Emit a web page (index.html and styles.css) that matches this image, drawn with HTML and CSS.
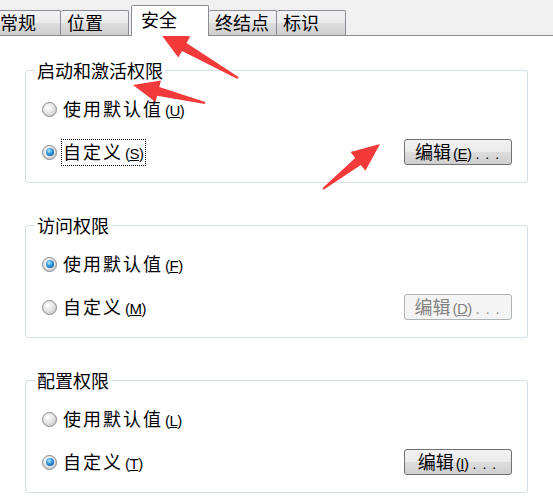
FILE: index.html
```html
<!DOCTYPE html>
<html lang="zh-CN">
<head>
    <meta charset="UTF-8">
    <title>安全</title>
    <link rel="stylesheet" href="styles.css">
</head>
<body>
    <div class="window">
        <div class="tabstrip">
            <div class="tab">常规</div>
            <div class="tab">位置</div>
            <div class="tab active">安全</div>
            <div class="tab">终结点</div>
            <div class="tab last">标识</div>
        </div>

        <div class="page">
            <fieldset class="group">
                <legend>启动和激活权限</legend>
                <div class="row">
                    <label class="option"><span class="radio"></span><span class="label">使用默认值<span class="key">(<u>U</u>)</span></span></label>
                </div>
                <div class="row">
                    <label class="option"><span class="radio checked"></span><span class="label focused">自定义<span class="key">(<u>S</u>)</span></span></label>
                    <button class="edit">编辑<span class="key">(<u>E</u>)</span><span class="dots">...</span></button>
                </div>
            </fieldset>

            <fieldset class="group">
                <legend>访问权限</legend>
                <div class="row">
                    <label class="option"><span class="radio checked"></span><span class="label">使用默认值<span class="key">(<u>F</u>)</span></span></label>
                </div>
                <div class="row">
                    <label class="option"><span class="radio"></span><span class="label">自定义<span class="key">(<u>M</u>)</span></span></label>
                    <button class="edit" disabled>编辑<span class="key">(<u>D</u>)</span><span class="dots">...</span></button>
                </div>
            </fieldset>

            <fieldset class="group">
                <legend>配置权限</legend>
                <div class="row">
                    <label class="option"><span class="radio"></span><span class="label">使用默认值<span class="key">(<u>L</u>)</span></span></label>
                </div>
                <div class="row">
                    <label class="option"><span class="radio checked"></span><span class="label">自定义<span class="key">(<u>T</u>)</span></span></label>
                    <button class="edit">编辑<span class="key">(<u>I</u>)</span><span class="dots">...</span></button>
                </div>
            </fieldset>
        </div>

        <!-- red annotation arrows -->
        <svg class="arrows" width="553" height="502" viewBox="0 0 553 502">
            <polygon points="160,33 190.3,36.6 186.5,43.1 238.5,77.1 237.5,78.9 182.1,50.9 178.3,57.4"/>
            <polygon points="133,85 160.9,80.6 159.3,86.9 205.2,102 204.8,104 157.1,95.7 155.5,102"/>
            <polygon points="380,144 365.4,170.8 360.8,164.9 323.6,189.8 322.4,188.2 355.2,157.9 350.6,152"/>
        </svg>
    </div>
</body>
</html>
```

FILE: styles.css
```css
* {
    box-sizing: border-box;
}

body {
    margin: 0;
    background: #f0f0f0;
    font-family: "Noto Sans CJK SC", "Liberation Sans", sans-serif;
    color: #000;
}

.window {
    position: relative;
    width: 553px;
    height: 502px;
    overflow: hidden;
}

/* tabs */
.tabstrip {
    display: flex;
    align-items: flex-end;
    height: 36px;
    margin-left: -7px;
    border-bottom: 1px solid #898c95;
}

.tab {
    width: 68px;
    height: 25px;
    padding-left: 6px;
    border: 1px solid #898c95;
    border-bottom: none;
    border-radius: 2px 2px 0 0;
    background: linear-gradient(#f3f3f3 0%, #ebebeb 50%, #dddddd 51%, #cfcfcf 100%);
    font-size: 18px;
    line-height: 23px;
    white-space: nowrap;
}

.tab + .tab {
    border-left: none;
}

.tab.active {
    position: relative;
    z-index: 1;
    width: 78px;
    height: 31px;
    margin-left: 2px;
    margin-bottom: -1px;
    padding-left: 9px;
    border-left: 1px solid #898c95;
    background: #fff;
    line-height: 26px;
}

.tab.active + .tab {
    border-left: none;
}

.tab.last {
    width: 69px;
}

/* page */
.page {
    height: 466px;
    background: #fff;
    padding: 24px 25px 0;
    display: flex;
    flex-direction: column;
    gap: 32px;
}

.group {
    margin: 0;
    padding: 16px 15px 17px 16px;
    border: 1px solid #d5dfe5;
    border-radius: 3px;
    display: flex;
    flex-direction: column;
    gap: 17px;
}

.group legend {
    margin-left: -7px;
    padding: 0 2px;
    font-size: 18px;
    line-height: 20px;
}

.row {
    display: flex;
    align-items: center;
    justify-content: space-between;
    height: 26px;
}

.option {
    display: flex;
    align-items: center;
}

.radio {
    position: relative;
    width: 15px;
    height: 15px;
    border: 1px solid #8a8a8a;
    border-radius: 50%;
    background: radial-gradient(circle at 40% 35%, #ffffff 0%, #e6e6e6 45%, #bcbcbc 100%);
}

.radio.checked::after {
    content: "";
    position: absolute;
    top: 2.5px;
    left: 2.5px;
    width: 8px;
    height: 8px;
    border-radius: 50%;
    background: radial-gradient(circle at 40% 35%, #b8ecff 0%, #2f95e0 45%, #0b3f87 100%);
}

.label {
    margin-left: 6px;
    font-size: 18px;
    line-height: 20px;
    letter-spacing: 2px;
}

.label.focused {
    outline: 1px dotted #000;
    outline-offset: 1px;
}

.key {
    margin-left: 2px;
    font-family: "Liberation Sans", sans-serif;
    font-size: 15px;
    letter-spacing: -0.5px;
}

.dots {
    font-family: "Liberation Sans", sans-serif;
    font-size: 14px;
    letter-spacing: 6px;
    margin-left: 4px;
}

.edit {
    width: 108px;
    height: 26px;
    padding: 0 0 0 4px;
    border: 1px solid #707070;
    border-radius: 3px;
    background: linear-gradient(#f2f2f2 0%, #ebebeb 50%, #dddddd 51%, #cfcfcf 100%);
    font-family: inherit;
    font-size: 18px;
    line-height: 22px;
    color: #000;
    white-space: nowrap;
}

.edit:disabled {
    border-color: #adb2b5;
    background: #f4f4f4;
    color: #838383;
}

.arrows {
    position: absolute;
    top: 0;
    left: 0;
    pointer-events: none;
}

.arrows polygon {
    fill: #f23a3a;
}
```
